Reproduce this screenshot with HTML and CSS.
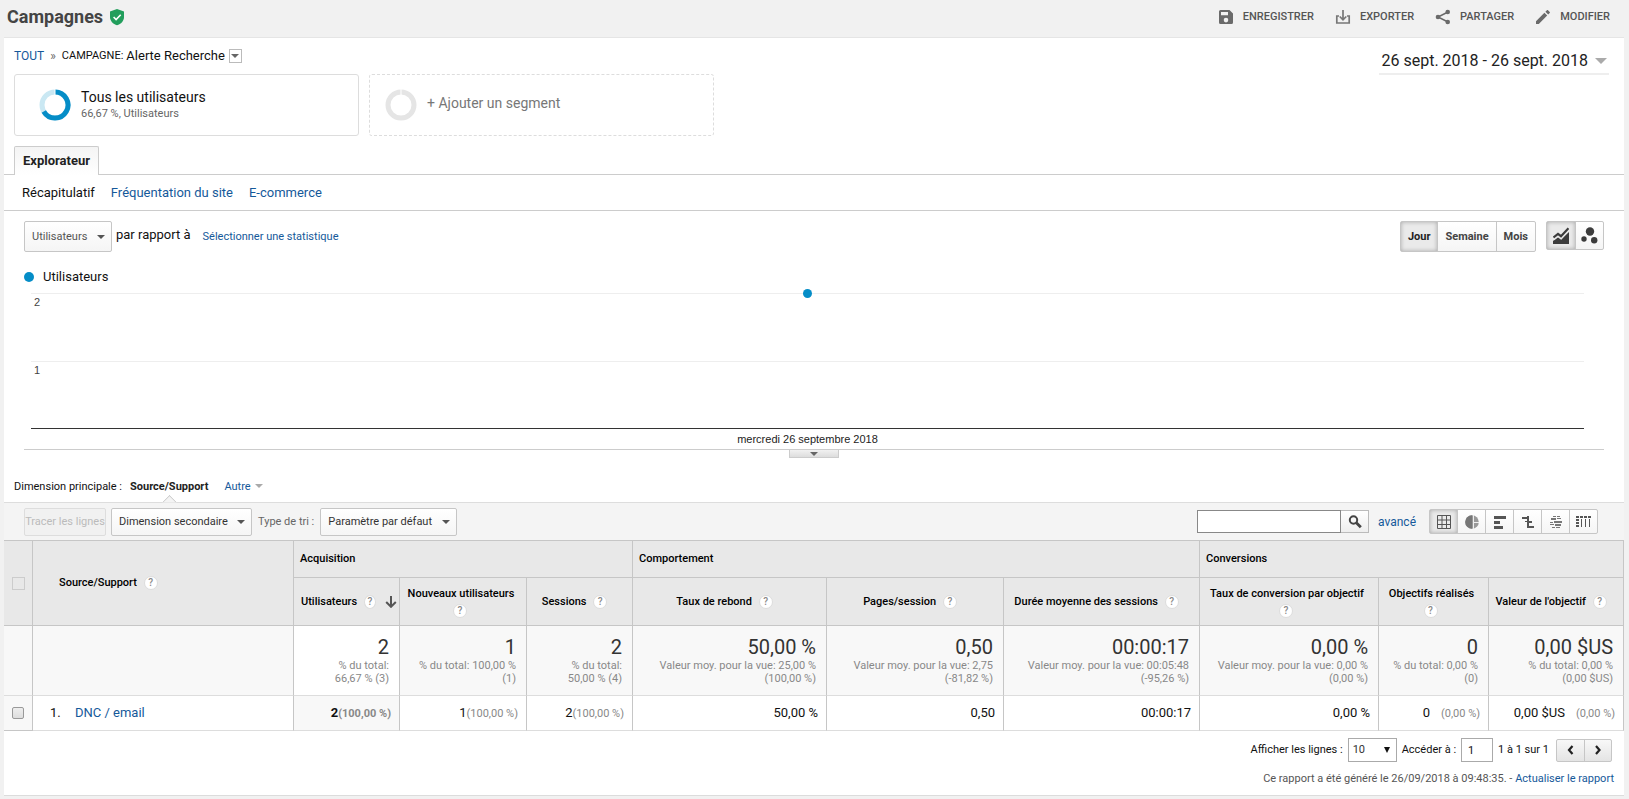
FILE: index.html
```html
<!DOCTYPE html>
<html lang="fr">
<head>
<meta charset="utf-8">
<title>Campagnes</title>
<link rel="stylesheet" href="styles.css">
</head>
<body>
<header class="topbar">
  <h1 class="title">Campagnes</h1>
  <svg class="shield" width="16" height="18" viewBox="0 0 16 18"><path fill="#229e5c" d="M8 1l7 2.6V9c0 4-3 7-7 8.2C4 16 1 13 1 9V3.600z"/><path d="M4.600 9l2.500 2.500 4.600-4.700" fill="none" stroke="#fff" stroke-width="1.600"/></svg>
  <nav class="actions">
    <button class="action" type="button"><svg width="16" height="16" viewBox="0 0 16 16"><path fill="#6a6a6a" fill-rule="evenodd" d="M2.500 1h9L15 4.500v9a1.500 1.500 0 0 1-1.500 1.500h-11A1.500 1.500 0 0 1 1 13.500v-11A1.500 1.500 0 0 1 2.500 1zM3 3v3.200h7V3zM8 8.800a2.300 2.300 0 1 0 0 4.600 2.300 2.300 0 0 0 0-4.600z"/></svg>ENREGISTRER</button>
    <button class="action" type="button"><svg width="16" height="16" viewBox="0 0 16 16"><path fill="none" stroke="#777" stroke-width="1.700" d="M4 7H1.800v7h12.400V7H12M8 1v9.500M4.700 7.500L8 10.800l3.300-3.300"/></svg>EXPORTER</button>
    <button class="action" type="button"><svg width="16" height="16" viewBox="0 0 16 16"><path fill="none" stroke="#6a6a6a" stroke-width="1.500" d="M13 3L3 8l10 5"/><g fill="#6a6a6a"><circle cx="12.700" cy="3" r="2.300"/><circle cx="3" cy="8" r="2.300"/><circle cx="12.700" cy="13" r="2.300"/></g></svg>PARTAGER</button>
    <button class="action" type="button"><svg width="16" height="16" viewBox="0 0 16 16"><path fill="#6a6a6a" d="M1 12.200V15h2.800l8.400-8.400-2.800-2.800zM14.700 4.100c.4-.4.4-.8 0-1.100l-1.700-1.700c-.3-.4-.7-.4-1.100 0L10.400 2.800l2.800 2.800z"/></svg>MODIFIER</button>
  </nav>
</header>

<main class="panel">
  <div class="intro">
    <div class="intro-main">
      <div class="crumbs">
        <a href="#">TOUT</a><span class="sep">»</span><span class="crumb-label">CAMPAGNE:</span><span class="crumb-value">Alerte Recherche</span><button class="crumb-menu" type="button" aria-label="Changer de campagne"><i class="caret"></i></button>
      </div>
      <div class="segments">
        <button class="segment" type="button">
          <svg class="ring" width="32" height="32" viewBox="0 0 32 32"><circle cx="16" cy="16" r="13" fill="none" stroke="#cae8f3" stroke-width="5"/><path d="M16 3A13 13 0 1 1 4.740 22.500" fill="none" stroke="#058dc7" stroke-width="5"/><path d="M16 0v6" stroke="#fff"/></svg>
          <span class="segment-text"><span class="segment-name">Tous les utilisateurs</span><span class="segment-sub">66,67 %, Utilisateurs</span></span>
        </button>
        <button class="segment segment-add" type="button">
          <svg class="ring" width="32" height="32" viewBox="0 0 32 32"><circle cx="16" cy="16" r="13" fill="none" stroke="#e5e5e5" stroke-width="5"/><path d="M16 0v6" stroke="#fff"/></svg>
          <span class="segment-name">+ Ajouter un segment</span>
        </button>
      </div>
    </div>
    <button class="dates" type="button">26 sept. 2018 - 26 sept. 2018<i class="caret caret-large"></i></button>
  </div>

  <div class="tabs"><button class="tab" type="button">Explorateur</button></div>
  <nav class="subnav"><span>Récapitulatif</span><a href="#">Fréquentation du site</a><a href="#">E-commerce</a></nav>

  <div class="chart-controls">
    <span class="picker picker-metric"><select aria-label="Statistique"><option>Utilisateurs</option></select></span>
    <span class="versus">par rapport à</span>
    <a class="small" href="#">Sélectionner une statistique</a>
    <div class="group period"><button class="on" type="button">Jour</button><button type="button">Semaine</button><button type="button">Mois</button></div>
    <div class="group kinds">
      <button class="on" type="button" aria-label="Courbe"><svg width="16" height="17" viewBox="0 0 16 17"><path fill="#3c3c3c" d="M0 17v-3l5-4 3 2.500L16 5v12z"/><path d="M0 11.500L5 7.500 8 9.800l7.500-8.300" fill="none" stroke="#eaeaea" stroke-width="4.200"/><path d="M.5 10.500L5 6.800 8 9.200l7.500-8" fill="none" stroke="#3c3c3c" stroke-width="2.200"/></svg></button>
      <button type="button" aria-label="Bulles"><svg width="18" height="17" viewBox="0 0 18 17"><g fill="#3c3c3c"><circle cx="9" cy="4.500" r="4.200"/><circle cx="3" cy="12" r="2.700"/><circle cx="13.200" cy="13.300" r="3.200"/></g></svg></button>
    </div>
  </div>

  <section class="chart">
    <div class="legend"><i class="dot"></i>Utilisateurs</div>
    <div class="plot">
      <div class="band">2</div>
      <div class="band">1</div>
      <i class="point"></i>
    </div>
    <div class="axis-label">mercredi 26 septembre 2018</div>
    <div class="chart-foot"><button class="handle" type="button" aria-label="Réduire"><i class="caret"></i></button></div>
  </section>

  <div class="dimensions"><span>Dimension principale :</span><strong class="current">Source/Support</strong><a href="#">Autre<i class="caret"></i></a></div>

  <div class="toolbar">
    <button class="plain-button" type="button" disabled>Tracer les lignes</button>
    <span class="picker picker-dimension"><select aria-label="Dimension secondaire"><option>Dimension secondaire</option></select></span>
    <label class="sort-label" for="sort">Type de tri :</label>
    <span class="picker picker-sort"><select id="sort"><option>Paramètre par défaut</option></select></span>
    <form class="search">
      <input type="text" aria-label="Rechercher"><button type="button" aria-label="Lancer la recherche"><svg width="14" height="14" viewBox="0 0 14 14"><circle cx="5.500" cy="5" r="3.700" fill="none" stroke="#444" stroke-width="2"/><path d="M8.300 7.800l4.500 4.500" stroke="#444" stroke-width="2.800"/></svg></button>
    </form>
    <a class="advanced" href="#">avancé</a>
    <div class="group views">
      <button class="on" type="button" aria-label="Tableau"><svg width="14" height="14" viewBox="0 0 14 14"><path d="M.5.5h13v13H.5zM.5 5h13M.5 9.500h13M5 .5v13M9.500 .5v13" fill="none" stroke="#555"/></svg></button>
      <button type="button" aria-label="Secteurs"><svg width="14" height="14" viewBox="0 0 14 14"><circle cx="7" cy="7" r="6.800" fill="#999"/><path fill="#777" d="M7 7V.2a6.800 6.800 0 0 0 0 13.600z"/><path fill="none" stroke="#eee" d="M8.500 0v14M9 7.500h5"/></svg></button>
      <button type="button" aria-label="Barres"><svg width="14" height="14" viewBox="0 0 14 14"><path fill="#555" d="M1 1h12v3H1zM1 6h6v3H1zM1 11h9v3H1z"/></svg></button>
      <button type="button" aria-label="Comparaison"><svg width="14" height="14" viewBox="0 0 14 14"><path fill="#555" d="M1 2h6v2H1zM7 6h4v2H7zM4 6h3v1H4zM7 11h6v2H7zM6 1h2v12H6z"/></svg></button>
      <button type="button" aria-label="Nuage de termes"><svg width="14" height="14" viewBox="0 0 14 14"><path fill="#777" d="M4 1h3v1H4zM8 1h3v1H8zM2 3h5v2H2zM8 3h4v1H8zM5 6h8v2H5zM1 7h3v1H1zM1 9h4v1H1zM6 9h6v2H6zM3 12h3v1H3zM7 12h4v1H7z"/></svg></button>
      <button type="button" aria-label="Tableau croisé"><svg width="16" height="14" viewBox="0 0 16 14"><path fill="#555" d="M0 1h3v2H0zM4 1h3v2H4zM8 1h3v2H8zM12 1h3v2h-3zM0 4h3v2H0zM0 7h3v2H0zM0 10h3v2H0zM5 4h1v8H5zM9 4h1v8H9zM13 4h1v8h-1z"/></svg></button>
    </div>
  </div>

  <table class="report">
    <colgroup><col class="c-check"><col class="c-source"><col class="c-users"><col class="c-new"><col class="c-sessions"><col class="c-bounce"><col class="c-pages"><col class="c-duration"><col class="c-rate"><col class="c-goals"><col class="c-value"></colgroup>
    <thead>
      <tr class="groups">
        <th rowspan="2" class="check"><input type="checkbox" class="flat" aria-label="Tout sélectionner" disabled></th>
        <th rowspan="2" class="source">Source/Support <i class="help">?</i></th>
        <th colspan="3">Acquisition</th><th colspan="3">Comportement</th><th colspan="3">Conversions</th>
      </tr>
      <tr class="metrics">
        <th class="sorted"><span>Utilisateurs <i class="help">?</i><svg width="12" height="12" viewBox="0 0 12 12"><path d="M6 0v10.500M1.200 6L6 10.800 10.800 6" fill="none" stroke="#555" stroke-width="2"/></svg></span></th>
        <th>Nouveaux utilisateurs <i class="help">?</i></th>
        <th>Sessions <i class="help">?</i></th>
        <th>Taux de rebond <i class="help">?</i></th>
        <th>Pages/session <i class="help">?</i></th>
        <th>Durée moyenne des sessions <i class="help">?</i></th>
        <th>Taux de conversion par objectif <i class="help">?</i></th>
        <th>Objectifs réalisés <i class="help">?</i></th>
        <th>Valeur de l'objectif <i class="help">?</i></th>
      </tr>
    </thead>
    <tbody>
      <tr class="totals">
        <td></td><td></td>
        <td class="lit"><b>2</b>% du total:<br>66,67 % (3)</td>
        <td><b>1</b>% du total: 100,00 %<br>(1)</td>
        <td><b>2</b>% du total:<br>50,00 % (4)</td>
        <td><b>50,00 %</b>Valeur moy. pour la vue: 25,00 %<br>(100,00 %)</td>
        <td><b>0,50</b>Valeur moy. pour la vue: 2,75<br>(-81,82 %)</td>
        <td><b>00:00:17</b>Valeur moy. pour la vue: 00:05:48<br>(-95,26 %)</td>
        <td><b>0,00 %</b>Valeur moy. pour la vue: 0,00 %<br>(0,00 %)</td>
        <td><b>0</b>% du total: 0,00 %<br>(0)</td>
        <td><b>0,00 $US</b>% du total: 0,00 %<br>(0,00 $US)</td>
      </tr>
      <tr class="line">
        <td class="check"><input type="checkbox" class="soft" aria-label="Sélectionner DNC / email"></td>
        <td class="name"><span class="rank">1.</span><a href="#">DNC / email</a></td>
        <td class="dim"><strong>2<small>(100,00 %)</small></strong></td>
        <td>1<small>(100,00 %)</small></td>
        <td>2<small>(100,00 %)</small></td>
        <td>50,00 %</td><td>0,50</td><td>00:00:17</td><td>0,00 %</td>
        <td>0<small class="apart">(0,00 %)</small></td>
        <td>0,00 $US<small class="apart">(0,00 %)</small></td>
      </tr>
    </tbody>
  </table>

  <div class="pager">
    <label for="rows">Afficher les lignes :</label>
    <span class="picker picker-rows"><select id="rows"><option>10</option></select></span>
    <label for="goto">Accéder à :</label>
    <input class="goto" id="goto" type="text" value="1">
    <span class="range">1 à 1 sur 1</span>
    <div class="group steps">
      <button type="button" aria-label="Précédent"><svg width="8" height="10" viewBox="0 0 8 10"><path d="M5.500 1L2 5l3.500 4" fill="none" stroke="#222" stroke-width="2.200"/></svg></button>
      <button type="button" aria-label="Suivant"><svg width="8" height="10" viewBox="0 0 8 10"><path d="M2 1l3.500 4L2 9" fill="none" stroke="#222" stroke-width="2.200"/></svg></button>
    </div>
  </div>
  <p class="generated">Ce rapport a été généré le 26/09/2018 à 09:48:35. - <a href="#">Actualiser le rapport</a></p>
</main>
</body>
</html>
```

FILE: styles.css
```css
* { box-sizing: border-box; }

body {
  margin: 0;
  background: #f1f1f1;
  color: #111;
  font: 11px/14px Roboto, Arial, sans-serif;
}

button, input, select { font: inherit; color: inherit; margin: 0; }
button { padding: 0; border: 0; background: none; }
a { color: #15599a; text-decoration: none; }
svg { display: block; flex: none; }

.caret {
  display: inline-block;
  border: 4px solid transparent;
  border-top-color: #666;
  border-bottom: 0;
}
.caret-large { border-width: 6px; border-bottom: 0; border-top-color: #aaa; }

/* Title bar */
.topbar { display: flex; align-items: center; height: 37px; padding: 0 19px 4px 7px; }
.title { margin: 0; font-size: 18px; line-height: 24px; font-weight: 700; color: #444; }
.shield { margin-left: 6px; }
.actions { display: flex; gap: 21px; margin-left: auto; }
.action { display: flex; align-items: center; gap: 9px; font-weight: 500; color: #555; }

.panel {
  margin: 0 5px 0 4px;
  background: #fff;
  border-top: 1px solid #e5e5e5;
  border-bottom: 1px solid #dcdcdc;
}

/* Breadcrumb, segments and dates */
.intro { display: flex; justify-content: space-between; padding: 8px 15px 10px 10px; }
.crumbs { display: flex; align-items: center; height: 20px; font-size: 12px; }
.crumbs .sep { margin: 0 6px; color: #666; }
.crumb-label { font-size: 11px; }
.crumb-value { margin-left: 3px; font-size: 13px; }
.crumb-menu { display: grid; place-items: center; width: 13px; height: 14px; margin-left: 4px; border: 1px solid #bbb; }
.segments { display: flex; gap: 10px; margin-top: 8px; }
.segment {
  display: flex;
  align-items: center;
  gap: 10px;
  width: 345px;
  height: 62px;
  padding-left: 24px;
  border: 1px solid #ddd;
  border-radius: 3px;
  text-align: left;
}
.segment-text { display: grid; }
.segment-name { font-size: 14px; line-height: 18px; color: #111; }
.segment-sub { font-size: 11px; line-height: 16px; color: #666; }
.segment-add { padding-left: 15px; border-style: dashed; }
.segment-add .segment-name { color: #777; padding-bottom: 5px; }
.dates {
  display: flex;
  align-items: center;
  gap: 7px;
  height: 29px;
  padding: 2px 2px 0 3px;
  border-bottom: 2px solid #eee;
  font-size: 16px;
  line-height: 20px;
  color: #222;
}

/* Tabs */
.tabs { display: flex; height: 29px; padding-left: 10px; border-bottom: 1px solid #ccc; }
.tab {
  height: 29px;
  padding: 0 8px;
  border: 1px solid #ccc;
  border-bottom: 0;
  border-radius: 2px 2px 0 0;
  background: linear-gradient(#f4f4f4, #fff);
  font-size: 13px;
  font-weight: 700;
  color: #222;
}
.subnav {
  display: flex;
  align-items: center;
  gap: 16px;
  height: 36px;
  padding: 0 18px;
  border-bottom: 1px solid #ccc;
  font-size: 13px;
}

/* Drop-downs: the arrow shares a grid cell with the select */
.picker { display: inline-grid; align-items: center; }
.picker select, .picker::after { grid-area: 1 / 1; }
.picker::after {
  content: "";
  justify-self: end;
  margin-right: 7px;
  border: 4px solid transparent;
  border-top-color: #555;
  border-bottom: 0;
  pointer-events: none;
}
.picker select {
  appearance: none;
  width: 100%;
  height: 28px;
  padding: 0 7px;
  border: 1px solid #c6c6c6;
  border-radius: 2px;
  background: linear-gradient(#fff, #f5f5f5);
  color: #333;
}
.picker-metric { width: 88px; }
.picker-metric select { height: 31px; color: #555; }
.picker-dimension { width: 141px; }
.picker-sort { width: 137px; }
.picker-rows { width: 49px; }
.picker-rows select { height: 24px; padding: 0 4px; border-color: #aaa; border-radius: 0; background: #fff; }
.picker-rows::after { border-width: 3px; border-top: 6px solid #111; border-bottom: 0; }

/* Button groups */
.group { display: flex; border: 1px solid #c6c6c6; border-radius: 2px; background: linear-gradient(#fff, #f5f5f5); }
.group button { display: grid; place-items: center; font-weight: 700; color: #444; }
.group button + button { border-left: 1px solid #c6c6c6; }
.group .on { background: #eaeaea; color: #222; box-shadow: inset 0 0 4px #aaa; }

.chart-controls { display: flex; align-items: flex-start; height: 41px; padding: 10px 20px 0; }
.versus { margin: 6px 12px 0 4px; font-size: 13px; line-height: 16px; }
.small { margin-top: 9px; }
.period { height: 31px; margin-left: auto; }
.period button { padding: 0 7px; }
.kinds { height: 29px; margin-left: 10px; }
.kinds button { width: 28px; }

/* Chart */
.chart { padding: 0 20px; }
.legend { display: flex; align-items: center; gap: 9px; height: 16px; margin-top: 17px; font-size: 13px; }
.dot { width: 10px; height: 10px; border-radius: 50%; background: #058dc7; }
.plot {
  position: relative;
  margin: 8px 20px 0 7px;
  border-bottom: 1px solid #333;
  font-family: "Liberation Sans", Arial, sans-serif;
  color: #444;
}
.band { height: 68px; padding: 1px 3px; border-top: 1px solid #eee; }
.band + .band { height: 67px; }
.point {
  position: absolute;
  top: -4px;
  left: calc(50% - 5px);
  width: 9px;
  height: 9px;
  border-radius: 50%;
  background: #058dc7;
}
.axis-label { margin: 3px 20px 3px 7px; text-align: center; color: #222; font-family: "Liberation Sans", Arial, sans-serif; }
.chart-foot { display: flex; justify-content: center; height: 30px; border-top: 1px solid #ccc; }
.handle {
  display: grid;
  place-items: center;
  width: 50px;
  height: 8px;
  border: 1px solid #ccc;
  border-top: 0;
  background: linear-gradient(#f1f1f1, #ddd);
}

/* Dimensions and toolbar */
.dimensions { display: flex; align-items: stretch; height: 24px; padding: 1px 10px 0; border-bottom: 1px solid #ddd; }
.current { display: flex; flex-direction: column; justify-content: space-between; margin: 0 16px 0 8px; color: #222; }
.current::after {
  content: "";
  width: 9px;
  height: 9px;
  align-self: center;
  flex: none;
  margin-bottom: -6px;
  border: 1px solid #ccc;
  border-right-color: transparent;
  border-bottom-color: transparent;
  background: #f4f4f4;
  transform: rotate(45deg);
  clip-path: polygon(0 0, 100% 0, 0 100%);
}
.dimensions .caret { margin: 0 0 2px 4px; border-top-color: #aaa; }
.toolbar { display: flex; align-items: center; height: 37px; padding: 0 26px 0 20px; background: #f4f4f4; }
.plain-button {
  width: 82px;
  height: 28px;
  margin-right: 5px;
  border: 1px solid #ddd;
  border-radius: 2px;
  background: #f1f1f1;
  color: #bbb;
  white-space: nowrap;
}
.sort-label { margin: 0 6px; color: #666; }
.search { display: flex; height: 23px; margin-left: auto; }
.search input { width: 144px; padding: 0 4px; border: 1px solid #888; background: #fff; }
.search button { display: grid; place-items: center; width: 28px; border: 1px solid #bbb; border-left: 0; background: linear-gradient(#fff, #eee); }
.advanced { margin: 0 13px 0 9px; font-size: 12px; }
.views { height: 25px; }
.views button { width: 28px; }
.views button:first-child { width: 27px; }

/* Report table */
.report { width: 100%; table-layout: fixed; border-collapse: separate; border-spacing: 0; border-top: 1px solid #c6c6c6; }
.c-check { width: 29px; }
.c-source { width: 261px; }
.c-users, .c-sessions { width: 106px; }
.c-new { width: 127px; }
.c-bounce { width: 194px; }
.c-pages { width: 177px; }
.c-duration { width: 196px; }
.c-rate { width: 179px; }
.c-goals { width: 110px; }
.c-value { width: 135px; }
.report th, .report td { border-right: 1px solid #c6c6c6; }
.report th { padding: 0 6px; border-bottom: 1px solid #c6c6c6; background: #e8e8e8; font-weight: 500; color: #000; text-align: left; }
.groups { height: 37px; }
.metrics { height: 48px; }
.report .metrics th { padding: 0 8px 0 4px; text-align: center; line-height: 17px; }
.report .source { padding-left: 26px; }
.report .check { padding: 0; text-align: center; }
.sorted span { display: flex; align-items: center; white-space: nowrap; }
.sorted .help { margin: 0 9px 0 7px; }
.report .metrics .sorted { padding: 0 2px 0 7px; }
.help {
  display: inline-block;
  width: 14px;
  height: 14px;
  margin: 0 6px 0 4px;
  border: 1px solid #ddd;
  border-radius: 50%;
  background: #fff;
  font-style: normal;
  font-size: 10px;
  line-height: 12px;
  color: #888;
  text-align: center;
  vertical-align: middle;
}
.totals { height: 70px; }
.totals td {
  padding: 11px 10px 0 4px;
  border-bottom: 1px solid #ddd;
  background: #f8f8f8;
  color: #888;
  line-height: 13px;
  text-align: right;
  vertical-align: top;
  white-space: nowrap;
}
.totals .lit { background: #fff; }
.totals b { display: block; margin-bottom: 2px; font-size: 20px; line-height: 20px; font-weight: 400; color: #333; }
.line { height: 35px; }
.line td { padding: 0 8px 0 4px; border-bottom: 1px solid #ddd; font-size: 13px; text-align: right; white-space: nowrap; }
.line small { font-size: 11px; color: #888; }
.line .apart { margin-left: 11px; }
.line .dim { background: #f8f8f8; }
.line .check { background: #f8f8f8; border-bottom-color: #c6c6c6; }
.line .name { padding-left: 17px; text-align: left; }
.rank { display: inline-block; width: 25px; }
.flat, .soft { display: block; appearance: none; margin: 0 auto; width: 13px; height: 13px; border: 1px solid #ccc; }
.soft { width: 12px; height: 12px; border-color: #999; border-radius: 2px; background: linear-gradient(#eee, #ddd); }

/* Pager and footer */
.pager { display: flex; align-items: center; justify-content: flex-end; gap: 5px; padding: 7px 12px 0; }
.goto { width: 32px; height: 24px; padding: 0 6px; border: 1px solid #aaa; }
.range { margin-right: 2px; }
.steps { height: 23px; background: linear-gradient(#f8f8f8, #e4e4e4); }
.steps button { width: 27px; }
.generated { margin: 0; padding: 10px 10px 9px; color: #555; text-align: right; }
```
